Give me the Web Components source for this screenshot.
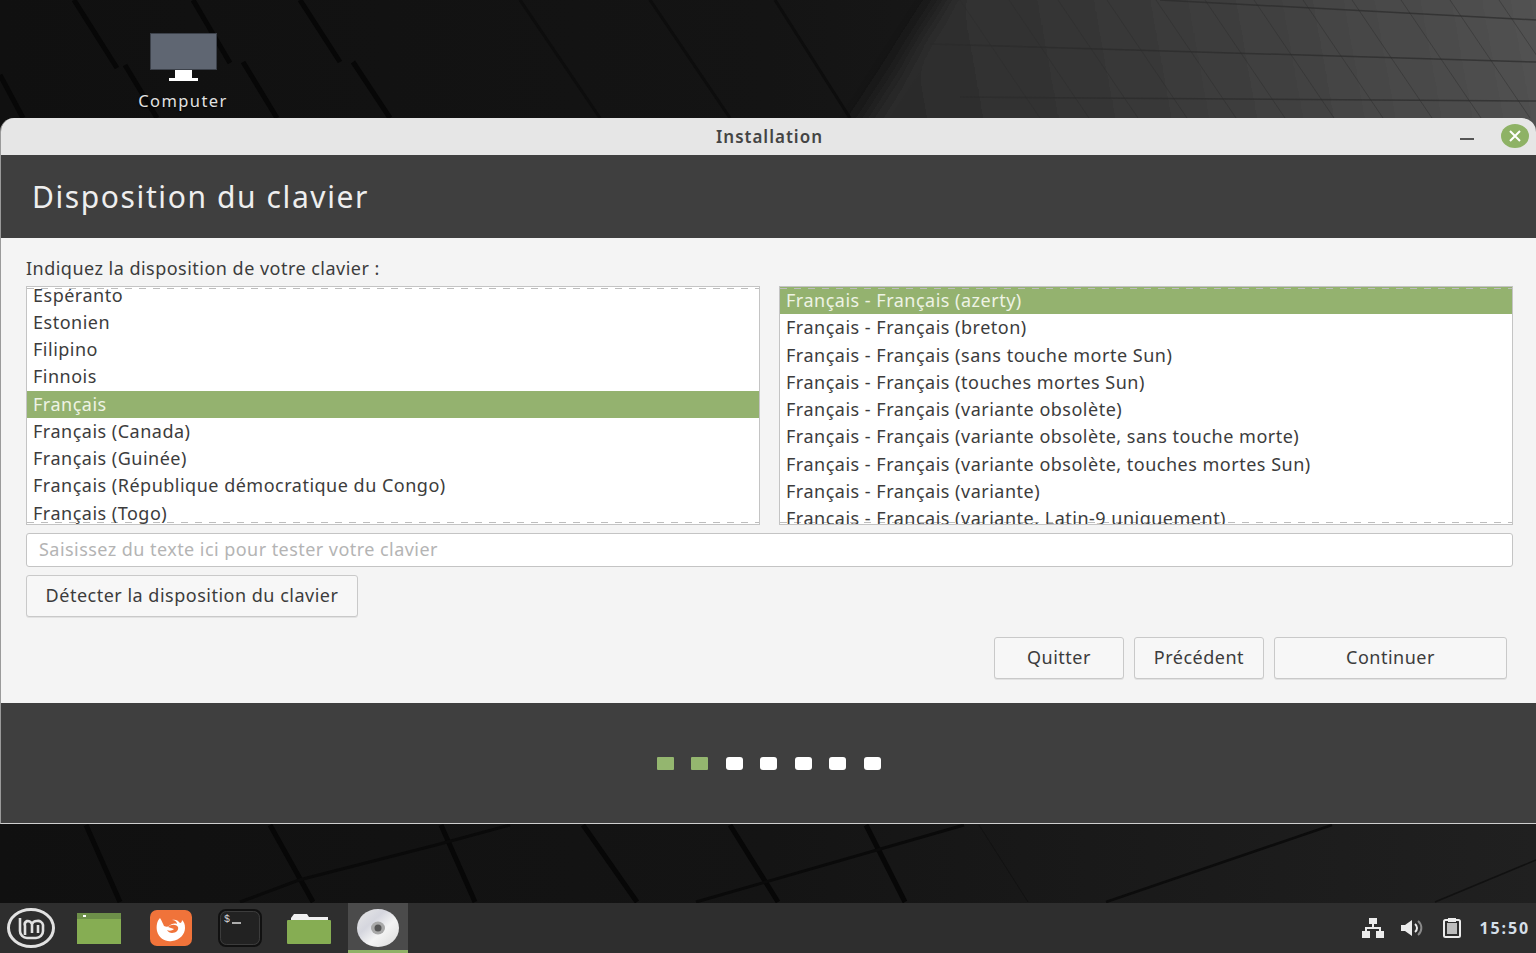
<!DOCTYPE html>
<html>
<head>
<meta charset="utf-8">
<style>
  html, body { margin: 0; height: 100%; }
  body { width: 1536px; height: 953px; overflow: hidden; background: #101010; font-family: "Noto Sans", "DejaVu Sans", sans-serif; }
  .desk { position: relative; width: 1536px; height: 953px; display: flex; flex-direction: column; }
  mint-wallpaper { position: absolute; left: 0; top: 0; }
  .spacer { flex: 1; }
</style>
</head>
<body>
<div class="desk">
  <mint-wallpaper></mint-wallpaper>
  <desk-icon></desk-icon>
  <install-window></install-window>
  <div class="spacer"></div>
  <mint-panel></mint-panel>
</div>

<script>
// wallpaper: dark blocks and the light wedge at top right
class MintWallpaper extends HTMLElement {
  constructor() {
    super();
    this.attachShadow({ mode: "open" });
    var grid = "";
    for (var x = 960; x < 1560; x += 49) {
      grid += "M" + x + " 0L" + (x + 80) + " 118";
    }
    this.shadowRoot.innerHTML = `
    <style>
      :host { display: block; width: 1536px; height: 953px; }
      svg { display: block; }
    </style>
    <svg width="1536" height="953" viewBox="0 0 1536 953">
      <defs>
        <linearGradient id="base" x1="0" y1="0" x2="1536" y2="0" gradientUnits="userSpaceOnUse">
          <stop offset="0" stop-color="#101010"/>
          <stop offset="0.5" stop-color="#141414"/>
          <stop offset="1" stop-color="#202020"/>
        </linearGradient>
        <linearGradient id="wedge" x1="880" y1="118" x2="1536" y2="0" gradientUnits="userSpaceOnUse">
          <stop offset="0" stop-color="#2a2a2a"/>
          <stop offset="0.5" stop-color="#3c3c3c"/>
          <stop offset="1" stop-color="#525252"/>
        </linearGradient>
        <filter id="soft" x="-10%" y="-30%" width="120%" height="160%"><feGaussianBlur stdDeviation="12"/></filter>
      </defs>
      <rect width="1536" height="953" fill="url(#base)"/>
      <polygon points="962,-30 1600,-30 1600,160 838,160" fill="url(#wedge)" filter="url(#soft)"/>
      <g stroke="#070707" stroke-width="5" fill="none">
        <path d="M74 0L117 68M125 65L157 118M0 75L23 118M193 0L230 63M243 62L277 118M300 0L340 62M353 62L390 118"/>
        <path d="M520 0L600 118M650 0L730 118M775 0L850 118" stroke="#0d0d0d" stroke-width="3"/>
        <path d="M86 825L120 902M270 825L313 902M441 825L475 902M583 825L637 902M730 825L778 902M866 825L905 902"/>
        <path d="M240 902L299 880L436 845L510 825M696 902L964 825" stroke="#0a0a0a" stroke-width="3"/>
        <path d="M1106 902L1332 825" stroke="#0c0c0c" stroke-width="2.5"/>
        <path d="M1435 902L1536 860" stroke="#111" stroke-width="1.5"/>
        <path d="M979 825L1028 902" stroke="#121212" stroke-width="1"/>
      </g>
      <g stroke="#2c2c2c" fill="none" stroke-width="1" opacity=".45">
        <path d="${grid}"/>
      </g>
      <g stroke="#2b2b2b" fill="none" stroke-width="1.5" opacity=".7">
        <path d="M930 44L1536 62M1160 0L1536 20M960 97L1536 101"/>
      </g>
    </svg>`;
  }
}
customElements.define("mint-wallpaper", MintWallpaper);

var template_deskIcon = document.createElement("template");
template_deskIcon.innerHTML = `
<style>
  :host { display: flex; position: relative; flex-direction: column; align-items: center; width: 120px; height: 118px; margin-left: 123px; box-sizing: border-box; padding-top: 32px; color: #e2e2e2; font-size: 16.5px; letter-spacing: 1.4px; }
  svg { display: block; }
  span { margin-top: 8px; line-height: 21px; text-shadow: 0 1px 2px #000; }
</style>
<svg width="70" height="50" viewBox="0 0 70 50">
  <rect x="2.5" y="1.5" width="66" height="36" fill="#5f6672" stroke="#3c414a" stroke-width="1"/>
  <path d="M27 38h17v8h-17z" fill="#fff"/>
  <path d="M21 46h29v3h-29z" fill="#fff"/>
</svg>
<span>Computer</span>
`;
class DeskIcon extends HTMLElement {
  constructor() {
    super();
    this.attachShadow({ mode: "open" });
    this.shadowRoot.appendChild(template_deskIcon.content.cloneNode(true));
  }
}
customElements.define("desk-icon", DeskIcon);

var template_pushBtn = document.createElement("template");
template_pushBtn.innerHTML = `
<style>
  :host { display: flex; align-items: center; justify-content: center; box-sizing: border-box; height: 42px; padding-bottom: 3px; background: #f7f7f7; border: 1px solid #c9c9c9; border-radius: 3px; color: #3c3c3c; font-size: 18px; letter-spacing: .5px; box-shadow: 0 1px 0 #e2e2e2; }
</style>
<slot></slot>
`;
class PushBtn extends HTMLElement {
  constructor() {
    super();
    this.attachShadow({ mode: "open" });
    this.shadowRoot.appendChild(template_pushBtn.content.cloneNode(true));
  }
}
customElements.define("push-btn", PushBtn);

// list with a scrolled offset, --shift is how much of the first row is hidden
var template_kbList = document.createElement("template");
template_kbList.innerHTML = `
<style>
  :host { display: block; position: relative; box-sizing: border-box; height: 239px; background: #fff; border: 1px solid #c4c4c4; overflow: hidden; color: #3c3c3c; font-size: 18px; letter-spacing: .5px; }
  .rows { position: relative; z-index: 1; display: flex; flex-direction: column; margin-top: var(--shift, 0); }
  .dash { position: absolute; left: 0; right: 0; height: 1px; background: repeating-linear-gradient(90deg, #bdbdbd 0 7px, transparent 7px 14px); }
  .top { top: 1px; z-index: 2; }
  .bottom { bottom: 1px; z-index: 0; }
</style>
<div class="rows"><slot></slot></div>
<div class="dash top"></div>
<div class="dash bottom"></div>
`;
class KbList extends HTMLElement {
  constructor() {
    super();
    this.attachShadow({ mode: "open" });
    this.shadowRoot.appendChild(template_kbList.content.cloneNode(true));
  }
}
customElements.define("kb-list", KbList);

var template_kbRow = document.createElement("template");
template_kbRow.innerHTML = `
<style>
  :host { display: block; box-sizing: border-box; height: 27.25px; line-height: 27px; padding-left: 6px; white-space: nowrap; }
  :host([selected]) { background: #94b26f; color: #eef3e4; }
</style>
<slot></slot>
`;
class KbRow extends HTMLElement {
  constructor() {
    super();
    this.attachShadow({ mode: "open" });
    this.shadowRoot.appendChild(template_kbRow.content.cloneNode(true));
  }
}
customElements.define("kb-row", KbRow);

var template_stepDots = document.createElement("template");
template_stepDots.innerHTML = `
<style>
  :host { display: flex; gap: 17.5px; justify-content: center; }
  i { display: block; width: 17px; height: 13px; border-radius: 3px; background: #fff; }
  i.on { background: #94b66f; border-radius: 1px; }
</style>
<i class="on"></i><i class="on"></i><i></i><i></i><i></i><i></i><i></i>
`;
class StepDots extends HTMLElement {
  constructor() {
    super();
    this.attachShadow({ mode: "open" });
    this.shadowRoot.appendChild(template_stepDots.content.cloneNode(true));
  }
}
customElements.define("step-dots", StepDots);

var template_window = document.createElement("template");
template_window.innerHTML = `
<style>
  :host { display: flex; position: relative; flex-direction: column; box-sizing: border-box; width: 1536px; height: 706px; background: #3f3f3f; border-radius: 14px 14px 0 0; border-left: 1px solid #9a9a9a; border-bottom: 1px solid #cfcfcf; overflow: hidden; }
  .title { display: flex; justify-content: center; align-items: center; height: 37px; background: #e6e6e6; color: #444; font-size: 17px; letter-spacing: 1px; position: relative; }
  .title b { font-weight: 600; padding-left: 2px; padding-bottom: 1px; }
  .ctrl { position: absolute; right: 7px; top: 5px; display: flex; align-items: center; gap: 27px; }
  .min { display: block; width: 14px; height: 2px; background: #555; margin-top: 6px; }
  .head { display: flex; align-items: center; height: 83px; box-sizing: border-box; padding-left: 31px; background: #3f3f3f; color: #eeeeee; font-size: 30px; letter-spacing: 1.6px; }
  .body { display: flex; flex-direction: column; box-sizing: border-box; height: 465px; background: #f4f4f4; padding: 19px 23px 0 25px; color: #3c3c3c; }
  .ask { height: 29px; line-height: 23px; font-size: 18px; letter-spacing: .48px; }
  .lists { display: grid; grid-template-columns: 734px 734px; gap: 19px; }
  .entry { display: flex; align-items: center; box-sizing: border-box; height: 34px; margin-top: 8px; padding: 0 0 2px 12px; background: #fff; border: 1px solid #c4c4c4; border-radius: 3px; color: #b4b4b4; font-size: 18px; letter-spacing: .45px; }
  .detect { display: flex; margin-top: 8px; }
  .detect push-btn { width: 332px; }
  .actions { display: flex; justify-content: flex-end; gap: 10px; margin-top: 20px; padding-right: 6px; }
  .actions push-btn:nth-child(1), .actions push-btn:nth-child(2) { width: 130px; }
  .actions push-btn:nth-child(3) { width: 233px; }
  .foot { flex: 1; display: flex; align-items: flex-start; justify-content: center; padding-top: 54px; }
</style>
<div class="title">
  <b>Installation</b>
  <div class="ctrl">
    <span class="min"></span>
    <svg width="28" height="26" viewBox="0 0 28 26"><ellipse cx="14" cy="13" rx="14" ry="12" fill="#8eb265"/><path d="M9 8l10 10M19 8L9 18" stroke="#fff" stroke-width="2" fill="none"/></svg>
  </div>
</div>
<div class="head">Disposition du clavier</div>
<div class="body">
  <div class="ask">Indiquez la disposition de votre clavier :</div>
  <div class="lists">
    <kb-list style="--shift:-5.4px">
      <kb-row>Espéranto</kb-row>
      <kb-row>Estonien</kb-row>
      <kb-row>Filipino</kb-row>
      <kb-row>Finnois</kb-row>
      <kb-row selected>Français</kb-row>
      <kb-row>Français (Canada)</kb-row>
      <kb-row>Français (Guinée)</kb-row>
      <kb-row>Français (République démocratique du Congo)</kb-row>
      <kb-row>Français (Togo)</kb-row>
    </kb-list>
    <kb-list>
      <kb-row selected>Français - Français (azerty)</kb-row>
      <kb-row>Français - Français (breton)</kb-row>
      <kb-row>Français - Français (sans touche morte Sun)</kb-row>
      <kb-row>Français - Français (touches mortes Sun)</kb-row>
      <kb-row>Français - Français (variante obsolète)</kb-row>
      <kb-row>Français - Français (variante obsolète, sans touche morte)</kb-row>
      <kb-row>Français - Français (variante obsolète, touches mortes Sun)</kb-row>
      <kb-row>Français - Français (variante)</kb-row>
      <kb-row>Français - Français (variante, Latin-9 uniquement)</kb-row>
    </kb-list>
  </div>
  <div class="entry">Saisissez du texte ici pour tester votre clavier</div>
  <div class="detect"><push-btn>Détecter la disposition du clavier</push-btn></div>
  <div class="actions">
    <push-btn>Quitter</push-btn>
    <push-btn>Précédent</push-btn>
    <push-btn>Continuer</push-btn>
  </div>
</div>
<div class="foot"><step-dots></step-dots></div>
`;
class InstallWindow extends HTMLElement {
  constructor() {
    super();
    this.attachShadow({ mode: "open" });
    this.shadowRoot.appendChild(template_window.content.cloneNode(true));
  }
}
customElements.define("install-window", InstallWindow);

var template_panel = document.createElement("template");
template_panel.innerHTML = `
<style>
  :host { display: flex; position: relative; align-items: center; height: 50px; background: #2e2e2e; color: #d5dfe8; }
  .launchers { display: flex; align-items: center; height: 50px; padding-left: 7px; }
  .logo { margin-right: 22px; }
  .window { margin-right: 29px; }
  .fox { margin-right: 26px; }
  .term { margin-right: 25px; }
  .folder { margin-right: 17px; }
  .active { display: flex; align-items: center; justify-content: center; width: 60px; height: 50px; box-sizing: border-box; background: #4b4b4b; border-bottom: 3px solid #8fb166; padding-top: 3px; }
  .tray { display: flex; align-items: center; margin-left: auto; padding-right: 6px; }
  .net { margin-right: 16px; }
  .vol { margin-right: 19px; }
  .clip { margin-right: 18px; }
  .clock { font-weight: 700; font-size: 16px; letter-spacing: 1.9px; }
  svg { display: block; }
</style>
<div class="launchers">
  <svg class="logo" width="48" height="42" viewBox="0 0 48 42">
    <ellipse cx="24" cy="21" rx="22.5" ry="18.5" fill="none" stroke="#e2e2e2" stroke-width="3"/>
    <path d="M13 11V24a7 7 0 0 0 7 7h9a7 7 0 0 0 7-7v-6a5 5 0 0 0-6-4 5 5 0 0 0-5 3 5 5 0 0 0-5-3 4 4 0 0 0-2 5v9M25 17v9M31 18v8" fill="none" stroke="#e2e2e2" stroke-width="2.6"/>
  </svg>
  <svg class="window" width="44" height="31" viewBox="0 0 44 31"><rect width="44" height="31" fill="#86ad53"/><rect width="44" height="6" fill="#6d8f49"/><rect x="6" y="2" width="3" height="2" fill="#fff"/></svg>
  <svg class="fox" width="42" height="36" viewBox="0 0 42 36">
    <rect width="42" height="36" rx="7" fill="#f0733a"/>
    <path d="M10 8c-3 3-4 8-3 13 2 8 9 11 15 10 8-1 13-7 13-13 0-4-1-6-3-8 0 2-1 3-2 3-2-3-5-4-8-3 3 0 5 2 5 4-3-1-6 0-8 2-1 1-3 1-5 0-1-2-2-5-4-8z" fill="#fff"/>
    <path d="M18 17c3-3 8-3 10 0 1 3-2 6-6 6-2 0-4-1-5-3 2 1 5 1 7-1-2-1-4-1-6-2z" fill="#f0733a"/>
  </svg>
  <svg class="term" width="44" height="38" viewBox="0 0 44 38"><rect x="1" y="1" width="42" height="36" rx="7" fill="#222" stroke="#111" stroke-width="2"/><rect x="2.5" y="2.5" width="39" height="33" rx="6" fill="none" stroke="#3c3c3c"/><path d="M14 14h9" stroke="#ddd" stroke-width="1.5"/><text x="6" y="13" fill="#ddd" font-size="10" font-family="Liberation Mono">$</text></svg>
  <svg class="folder" width="44" height="31" viewBox="0 0 44 31"><path d="M4 5l3-4h13l2 3h19v4H4z" fill="#f0f0f0"/><rect y="7" width="44" height="24" rx="1" fill="#86ad53"/></svg>
  <div class="active">
    <svg width="44" height="42" viewBox="0 0 44 42">
      <defs><linearGradient id="cd" x1="0" y1="0" x2="1" y2="1"><stop offset="0" stop-color="#e8e8e8"/><stop offset=".35" stop-color="#d5d6de"/><stop offset=".6" stop-color="#f4f4f4"/><stop offset="1" stop-color="#d8d8d8"/></linearGradient></defs>
      <ellipse cx="22" cy="21" rx="21" ry="19" fill="url(#cd)"/><ellipse cx="22" cy="21" rx="7" ry="6.5" fill="#a8a8a8"/><circle cx="22" cy="21" r="3.5" fill="#555"/>
    </svg>
  </div>
</div>
<div class="tray">
  <svg class="net" width="22" height="20" viewBox="0 0 22 20"><path d="M7 0h8v6H7zM0 13h8v7H0zM14 13h8v7h-8z" fill="#ececec"/><path d="M11 6v4M4 13v-3h14v3" stroke="#ececec" stroke-width="2" fill="none"/></svg>
  <svg class="vol" width="24" height="16" viewBox="0 0 24 16"><path d="M1 5h4l7-5v16l-7-5H1z" fill="#ececec"/><path d="M15 4a5 5 0 0 1 0 8" stroke="#ececec" stroke-width="2" fill="none"/><path d="M18 1a9 9 0 0 1 0 14" stroke="#8a8a8a" stroke-width="2" fill="none"/></svg>
  <svg class="clip" width="18" height="20" viewBox="0 0 18 20"><rect x="1" y="2" width="16" height="17" rx="1.5" fill="none" stroke="#ececec" stroke-width="2"/><rect x="5" y="0" width="8" height="4" fill="#ececec"/><rect x="4" y="5" width="10" height="11" fill="#bdbdbd"/></svg>
  <span class="clock">15:50</span>
</div>
`;
class MintPanel extends HTMLElement {
  constructor() {
    super();
    this.attachShadow({ mode: "open" });
    this.shadowRoot.appendChild(template_panel.content.cloneNode(true));
  }
}
customElements.define("mint-panel", MintPanel);
</script>
</body>
</html>
